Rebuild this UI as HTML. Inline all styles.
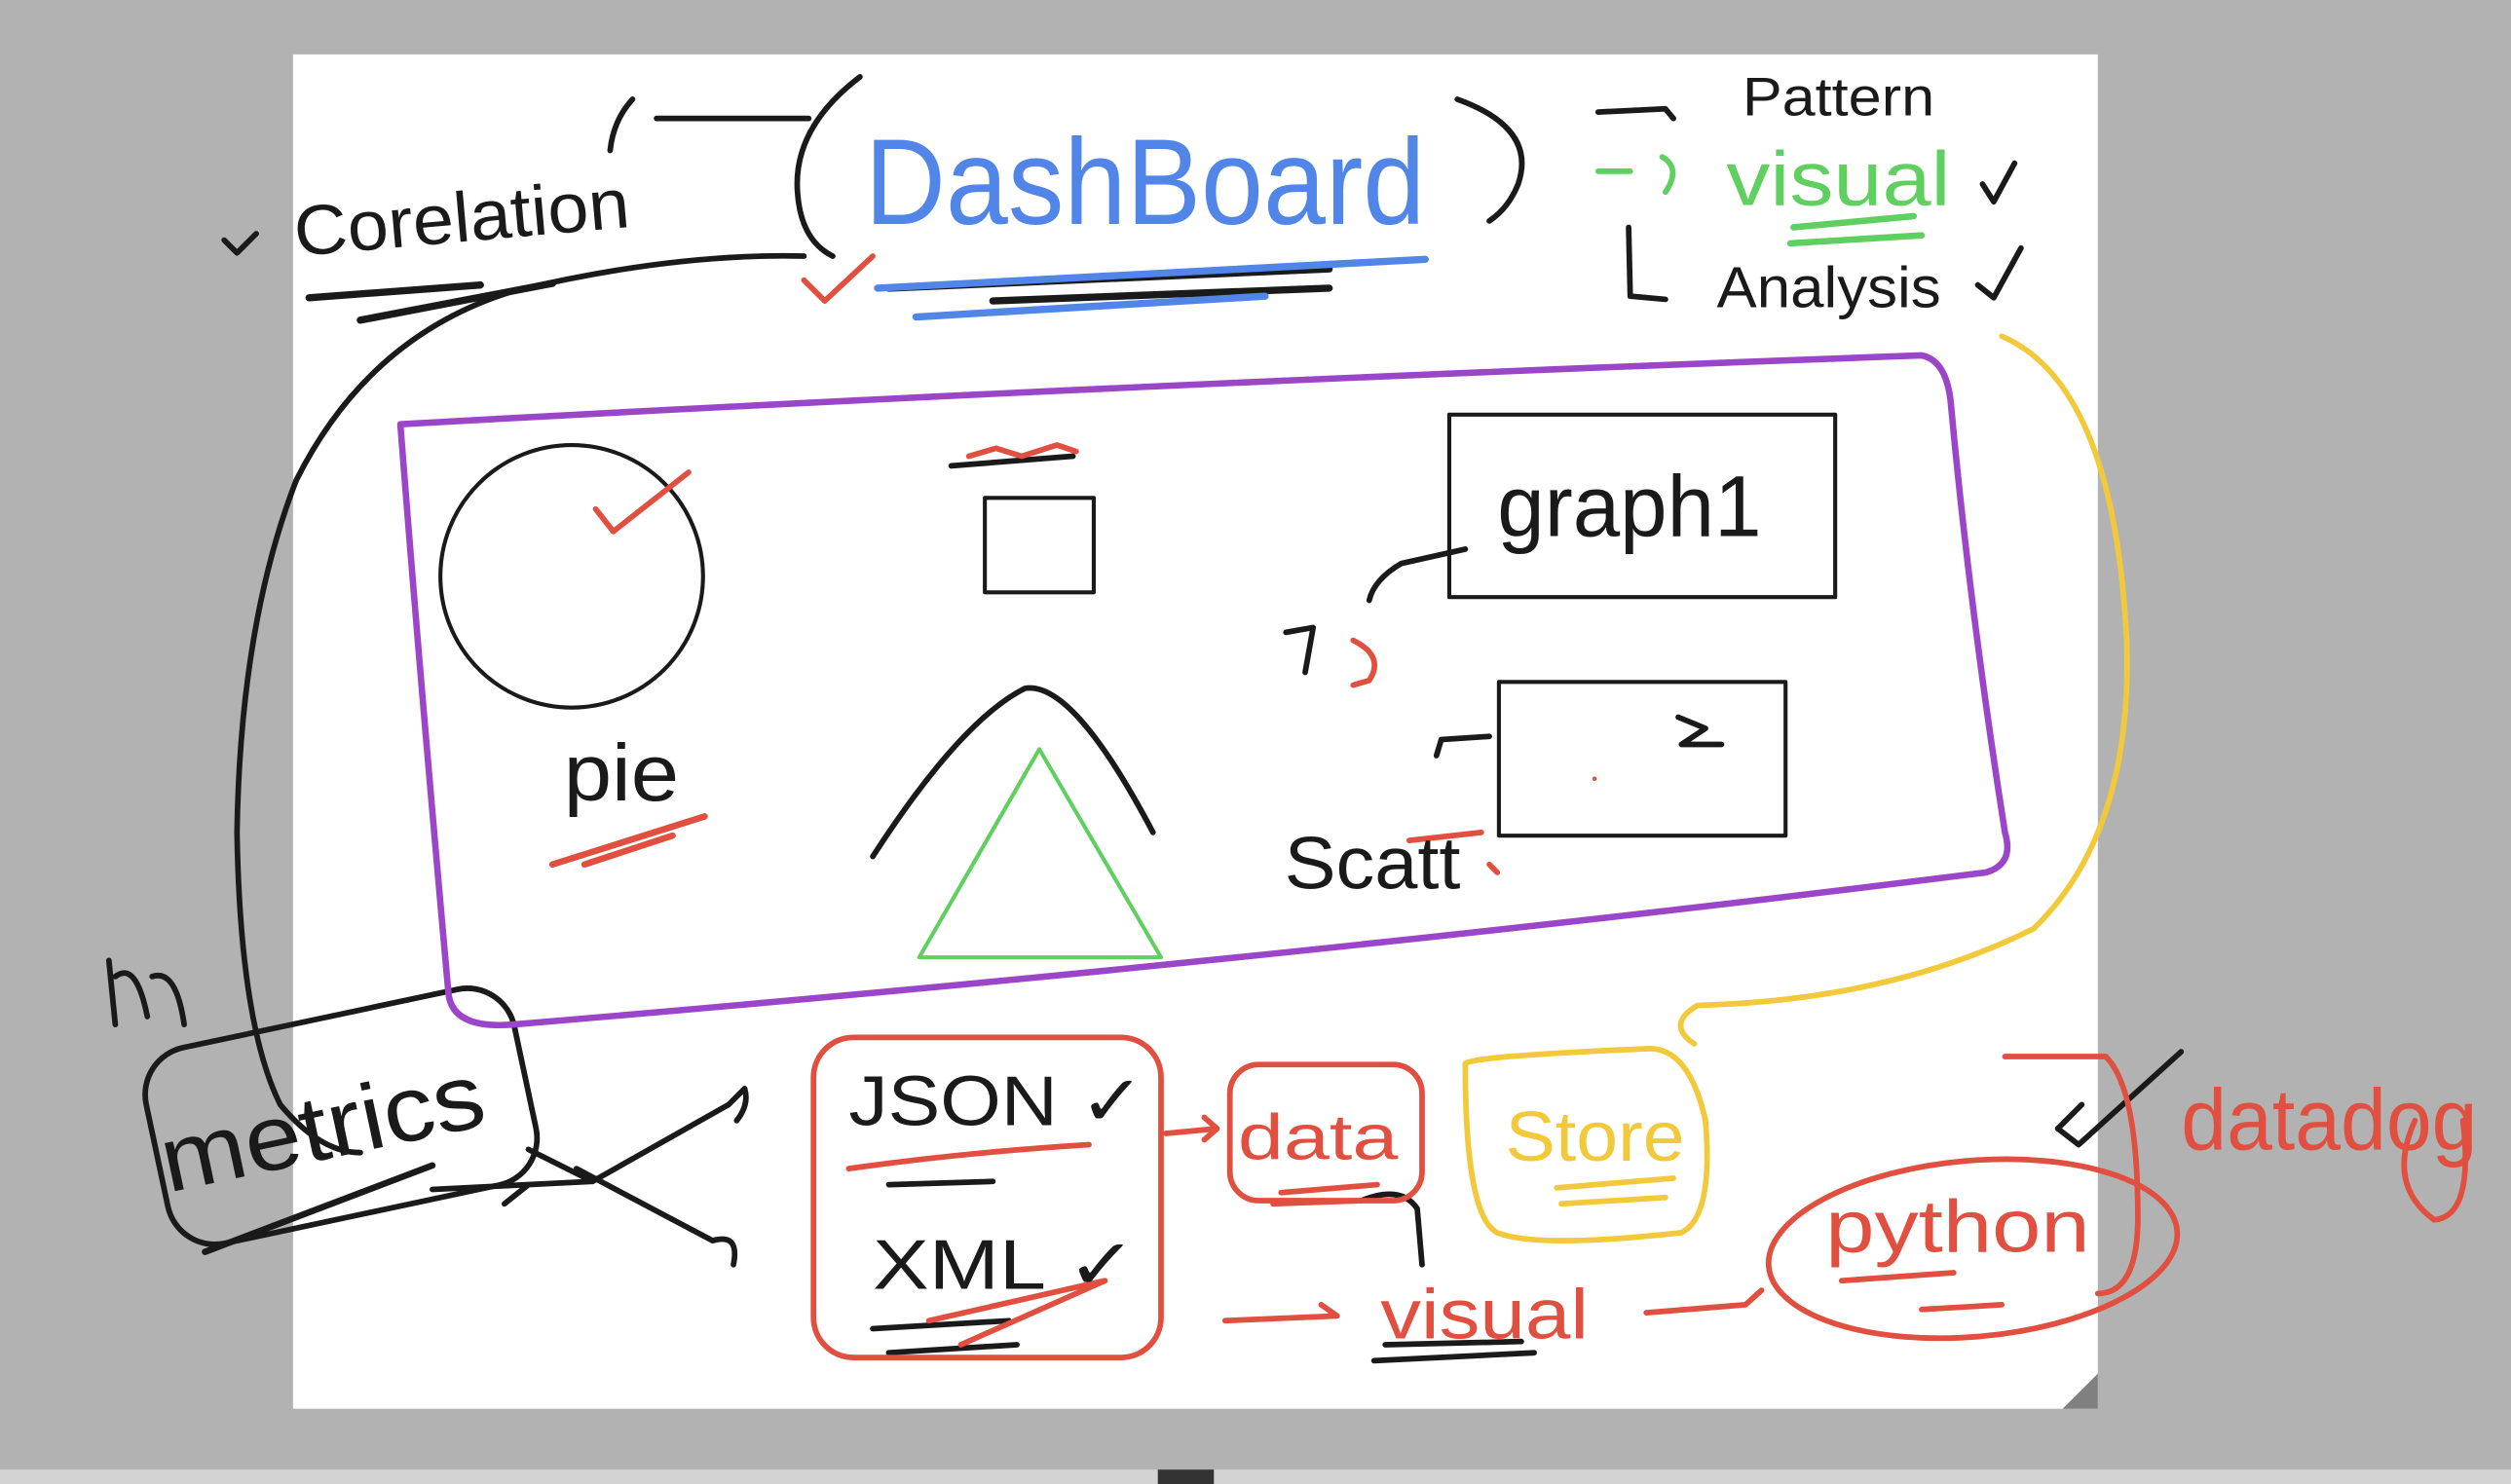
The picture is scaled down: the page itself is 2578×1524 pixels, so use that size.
<!DOCTYPE html>
<html><head><style>
html,body{margin:0;padding:0;width:2578px;height:1524px;overflow:hidden;background:#b2b2b2}
svg{display:block}
text{font-family:"Liberation Sans",sans-serif}
</style></head><body>
<svg width="2578" height="1524" viewBox="0 0 1568 927" preserveAspectRatio="none" xmlns="http://www.w3.org/2000/svg">
<rect width="1568" height="927" fill="#b2b2b2"/>
<rect x="0" y="918" width="1568" height="9" fill="#d3d3d3"/>
<rect x="723" y="918" width="35" height="9" fill="#333"/>
<rect x="183" y="34" width="1127" height="846" fill="#fff"/>
<polygon points="1310,858 1310,880 1288,880" fill="#808080"/>
<g fill="none" stroke-linecap="round" stroke-linejoin="round">
<g stroke="#1a1a1a" stroke-width="3.5">
<path d="M395,62 Q383,75 381,94"/>
<path d="M410,74 L505,74"/>
<path d="M537,48 Q495,80 498,120 Q500,150 520,160"/>
<path d="M910,62 Q960,80 948,115 Q942,130 930,138"/>
<path d="M998,70 L1040,68 L1045,74"/>
<path d="M1017,142 L1018,185 L1040,187"/>
<path d="M140,150 L148,158 L160,146"/>
<path d="M193,186 L300,178" stroke-width="4.5"/>
<path d="M225,200 L345,177" stroke-width="4.5"/>
<path d="M502,160 Q420,158 320,182 Q230,210 185,300 Q150,390 148,520 Q150,640 175,690 Q200,720 225,720"/>
<path d="M555,180 L830,168" stroke-width="4.5"/>
<path d="M620,188 L830,180" stroke-width="4.5"/>
<circle cx="357" cy="360" r="82" stroke-width="2.5"/>
<rect x="615" y="311" width="68" height="59" stroke-width="2.5"/>
<path d="M594,291 L670,285"/>
<path d="M545,535 Q600,450 640,430 Q670,425 720,520"/>
<rect x="905" y="259" width="241" height="114" stroke-width="2.5"/>
<rect x="936" y="426" width="179" height="96" stroke-width="2.5"/>
<path d="M915,343 L875,352 Q858,362 855,375"/>
<path d="M803,395 L820,392 L815,420"/>
<path d="M930,460 L900,462 L897,472"/>
<path d="M1048,448 L1065,455 L1050,465 L1075,465"/>
<path d="M1238,115 L1245,126 L1258,102"/>
<path d="M1235,178 L1245,186 L1262,155"/>
<rect x="95" y="635" width="235" height="125" rx="30" transform="rotate(-12 212 695)"/>
<path d="M128,782 L270,728" stroke-width="4"/>
<path d="M68,600 L72,640 M72,610 Q85,600 92,635 M95,610 Q110,605 115,640"/>
<path d="M270,743 L370,738 L330,718 M315,752 L330,740"/>
<path d="M370,738 L455,690 L465,680 Q468,690 460,700"/>
<path d="M360,730 L445,775 Q462,770 458,790"/>
<path d="M1285,705 L1298,715 L1362,657"/>
<path d="M1285,705 L1300,690"/>
<path d="M850,750 Q875,740 885,755 L888,790"/>
<path d="M858,850 L958,845 M865,840 L950,838"/>
<path d="M555,740 L620,738 M545,830 L630,825 M555,845 L635,840"/>
</g>
<g stroke="#5185e8" stroke-width="4.5">
<path d="M548,180 L890,162"/>
<path d="M572,198 L790,185"/>
</g>
<g stroke="#5fcf5f" stroke-width="3.5">
<path d="M998,107 L1018,107 M1038,98 Q1050,105 1040,120"/>
<path d="M1120,142 L1195,135 M1118,152 L1200,147" stroke-width="4"/>
<polygon points="649,468 574,598 725,598" stroke-width="2.5"/>
</g>
<path d="M250,265 Q700,240 1200,222 Q1215,225 1218,250 Q1230,380 1252,520 Q1258,540 1240,545 Q800,600 320,640 Q282,643 280,620 Q262,420 250,265 Z" stroke="#9b45c9" stroke-width="4"/>
<g stroke="#f2c93a" stroke-width="3.5">
<path d="M1250,210 Q1320,240 1328,400 Q1332,520 1270,580 Q1180,625 1060,628 Q1040,640 1058,652"/>
<path d="M915,665 Q912,660 1030,655 Q1055,655 1065,700 Q1070,760 1050,770 Q960,780 935,770 Q915,760 915,665 Z"/>
<path d="M972,742 L1045,736 M975,752 L1040,748"/>
</g>
<g stroke="#e04f3f" stroke-width="3.5">
<path d="M502,175 L515,188 L545,160"/>
<path d="M372,318 L383,332 L430,295"/>
<path d="M345,540 L440,510 M365,540 L420,522" stroke-width="4"/>
<path d="M605,285 L622,280 L638,285 L660,278 L672,282"/>
<path d="M845,400 Q865,410 855,425 L845,428"/>
<path d="M880,525 L925,520 M930,540 L935,545"/>
<rect x="508" y="648" width="217" height="200" rx="25"/>
<rect x="768" y="665" width="120" height="85" rx="18"/>
<path d="M728,708 L760,705 L752,698 M760,705 L752,712"/>
<path d="M530,730 Q600,720 680,715"/>
<path d="M580,825 L690,800 L600,840"/>
<path d="M800,745 L860,740 M795,752 L850,750"/>
<path d="M765,825 L835,822 L825,815"/>
<path d="M1028,820 L1090,815 L1100,806"/>
<ellipse cx="1232" cy="780" rx="128" ry="55" transform="rotate(-5 1232 780)"/>
<path d="M1252,660 L1315,660 Q1335,680 1335,760 Q1335,808 1310,808"/>
<path d="M1150,800 L1220,795 M1200,818 L1250,815"/>
<path d="M1508,700 Q1490,740 1520,762 Q1545,760 1538,700"/>
</g>
</g>
<g font-family="Liberation Sans, sans-serif">
<text x="185" y="160" font-size="44" fill="#1a1a1a" transform="rotate(-5 185 160)" textLength="210" lengthAdjust="spacingAndGlyphs">Corelation</text>
<text x="540" y="140" font-size="76" fill="#5185e8" textLength="350" lengthAdjust="spacingAndGlyphs">DashBoard</text>
<text x="1088" y="72" font-size="34" fill="#1a1a1a" textLength="120" lengthAdjust="spacingAndGlyphs">Pattern</text>
<text x="1078" y="128" font-size="48" fill="#5fcf5f" textLength="140" lengthAdjust="spacingAndGlyphs">visual</text>
<text x="1072" y="192" font-size="36" fill="#1a1a1a" textLength="140" lengthAdjust="spacingAndGlyphs">Analysis</text>
<text x="935" y="335" font-size="54" fill="#1a1a1a" textLength="165" lengthAdjust="spacingAndGlyphs">graph1</text>
<text x="352" y="500" font-size="50" fill="#1a1a1a" textLength="72" lengthAdjust="spacingAndGlyphs">pie</text>
<text x="802" y="555" font-size="46" fill="#1a1a1a" textLength="110" lengthAdjust="spacingAndGlyphs">Scatt</text>
<text x="105" y="745" font-size="58" fill="#1a1a1a" transform="rotate(-12 105 745)" textLength="205" lengthAdjust="spacingAndGlyphs">metrics</text>
<text x="530" y="703" font-size="44" fill="#1a1a1a" textLength="185" lengthAdjust="spacingAndGlyphs">JSON ✓</text>
<text x="545" y="805" font-size="44" fill="#1a1a1a" textLength="165" lengthAdjust="spacingAndGlyphs">XML ✓</text>
<text x="773" y="724" font-size="40" fill="#e04f3f" textLength="100" lengthAdjust="spacingAndGlyphs">data</text>
<text x="940" y="725" font-size="44" fill="#f2c93a" textLength="112" lengthAdjust="spacingAndGlyphs">Store</text>
<text x="862" y="836" font-size="44" fill="#e04f3f" textLength="130" lengthAdjust="spacingAndGlyphs">visual</text>
<text x="1140" y="782" font-size="46" fill="#e04f3f" textLength="165" lengthAdjust="spacingAndGlyphs">python</text>
<text x="1362" y="718" font-size="54" fill="#e04f3f" textLength="185" lengthAdjust="spacingAndGlyphs">datadog</text>
<text x="994" y="490" font-size="10" fill="#e04f3f">•</text>
</g>
</svg>
</body></html>
